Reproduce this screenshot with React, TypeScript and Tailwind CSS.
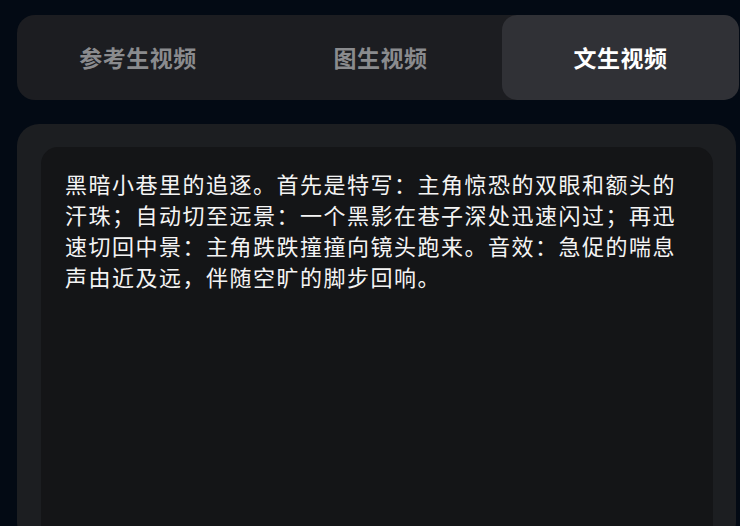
import React from "react";

const font = { fontFamily: '"Noto Sans CJK SC", "Noto Sans", sans-serif' };

export default function App() {
  const tabs = [
    { t: "参考生视频", w: "w-[242px]" },
    { t: "图生视频", w: "w-[243px]" },
    { t: "文生视频", w: "w-[237px]" },
  ];
  const active = 2;
  return (
    <div className="w-[740px] h-[526px] overflow-hidden bg-[#030a14] pl-[17px] pt-[15px]" style={font}>
      <div className="flex w-[722px] h-[85px] rounded-[18px] bg-[#1c1d21]">
        {tabs.map((tab, i) => (
          <div
            key={tab.t}
            className={
              tab.w +
              " flex items-center justify-center rounded-[15px] text-[23px] font-bold tracking-[0.5px] pb-[1px] " +
              (i === active ? "bg-[#303136] text-white" : "text-[#8a8b8e]")
            }
          >
            {tab.t}
          </div>
        ))}
      </div>
      <div className="mt-[24px] w-[719px] h-[420px] rounded-[22px] bg-[#1c1e21] pt-[23px] pl-[24px] pr-[23px]">
        <div className="h-full rounded-[17px] bg-[#141517] px-[24px] pt-[21px] text-[22px] leading-[31px] tracking-[1.5px] text-[#f4f4f4]">
          黑暗小巷里的追逐。首先是特写：主角惊恐的双眼和额头的汗珠；自动切至远景：一个黑影在巷子深处迅速闪过；再迅速切回中景：主角跌跌撞撞向镜头跑来。音效：急促的喘息声由近及远，伴随空旷的脚步回响。
        </div>
      </div>
    </div>
  );
}
